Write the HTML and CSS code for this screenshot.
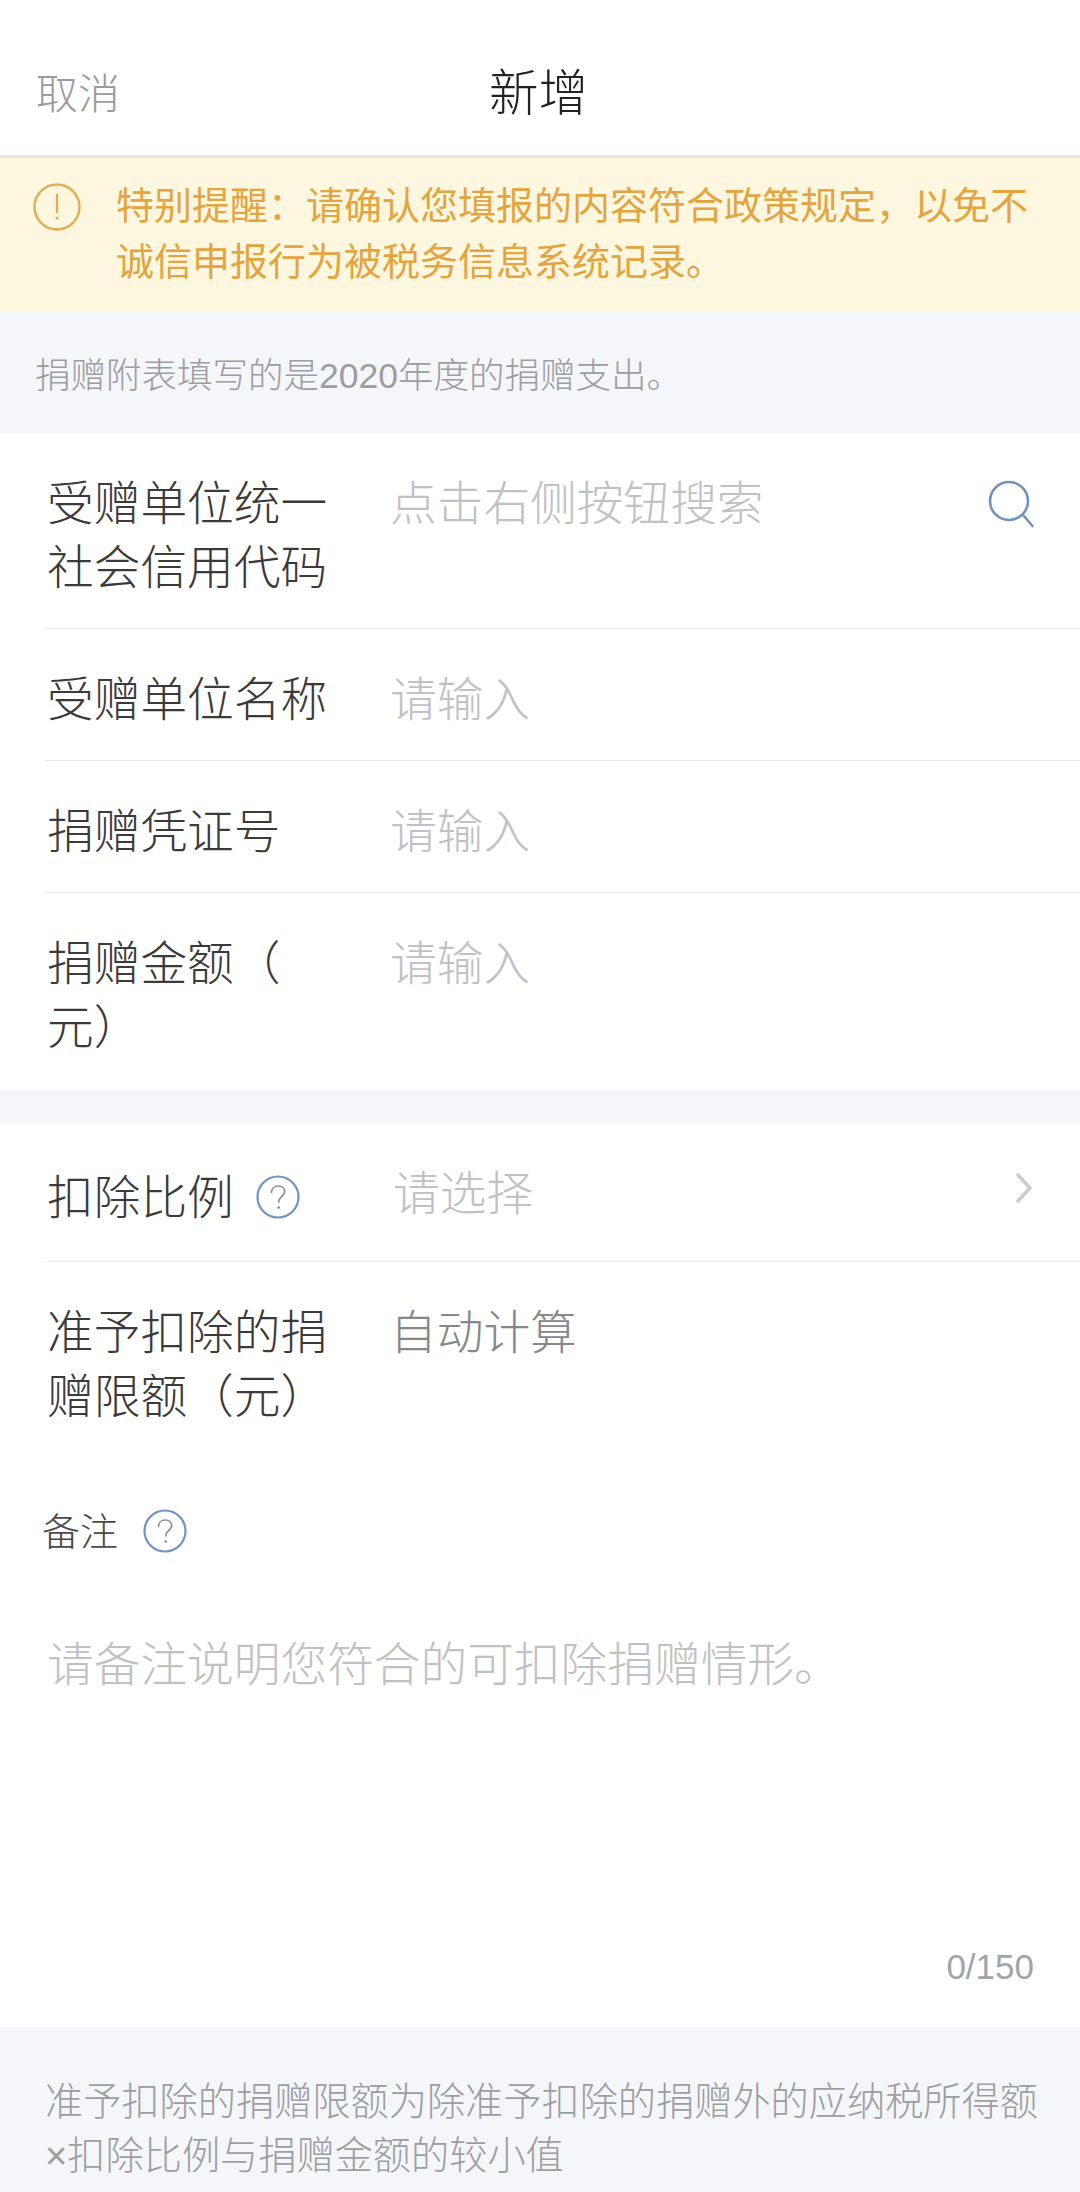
FILE: index.html
```html
<!DOCTYPE html>
<html lang="zh-CN">
<head>
<meta charset="utf-8">
<title>新增</title>
<link rel="stylesheet" href="styles.css">
</head>
<body>
<div class="page">
  <header class="nav">
    <span class="nav-cancel">取消</span>
    <h1 class="nav-title">新增</h1>
  </header>

  <section class="notice">
    <svg class="notice-icon" viewBox="0 0 48 48" width="48" height="48" aria-hidden="true">
      <circle cx="24" cy="24" r="22.5" fill="none" stroke="#e2ad54" stroke-width="2.4"/>
      <path d="M24 12v17" stroke="#e2ad54" stroke-width="2.4" stroke-linecap="round" fill="none"/>
      <circle cx="24" cy="35" r="1.6" fill="#e2ad54"/>
    </svg>
    <p class="notice-text">特别提醒&#xFF1A;请确认您填报的内容符合政策规定&#xFF0C;以免不诚信申报行为被税务信息系统记录。</p>
  </section>

  <p class="hint">捐赠附表填写的是<span class="num">2020</span>年度的捐赠支出。</p>

  <section class="group">
    <div class="row">
      <div class="row-label">受赠单位统一<br>社会信用代码</div>
      <div class="row-value placeholder">点击右侧按钮搜索</div>
      <svg class="search-icon" viewBox="0 0 50 50" width="50" height="50" aria-hidden="true">
        <circle cx="21" cy="21" r="19" fill="none" stroke="#6f93bd" stroke-width="2.6"/>
        <path d="M35 35l9.5 11" fill="none" stroke="#6f93bd" stroke-width="2.6" stroke-linecap="round"/>
      </svg>
    </div>
    <div class="row">
      <div class="row-label">受赠单位名称</div>
      <div class="row-value placeholder">请输入</div>
    </div>
    <div class="row">
      <div class="row-label">捐赠凭证号</div>
      <div class="row-value placeholder">请输入</div>
    </div>
    <div class="row row-last">
      <div class="row-label">捐赠金额&#xFF08;<br>元&#xFF09;</div>
      <div class="row-value placeholder">请输入</div>
    </div>
  </section>

  <section class="group group-second">
    <div class="row row-select">
      <div class="row-label label-help">
        <span>扣除比例</span>
        <svg class="help-icon help-icon-row" viewBox="0 0 44 44" width="44" height="44" aria-hidden="true">
          <circle cx="22" cy="22" r="20.5" fill="none" stroke="#6f93c4" stroke-width="2.2"/>
          <path d="M15.5 17.5c0-4 3-6.500 6.700-6.500 3.800 0 6.500 2.500 6.500 5.800 0 4.500-6 4.800-6 10.200" fill="none" stroke="#8a8c90" stroke-width="1.700" stroke-linecap="round"/>
          <circle cx="22.700" cy="32.500" r="1.300" fill="#8a8c90"/>
        </svg>
      </div>
      <div class="row-value row-value-select placeholder">请选择</div>
      <svg class="chevron" viewBox="0 0 20 32" width="20" height="32" aria-hidden="true">
        <path d="M4 3l12 13L4 29" fill="none" stroke="#c9cbce" stroke-width="3.600" stroke-linecap="round" stroke-linejoin="round"/>
      </svg>
    </div>
    <div class="row row-auto">
      <div class="row-label">准予扣除的捐<br>赠限额&#xFF08;元&#xFF09;</div>
      <div class="row-value auto">自动计算</div>
    </div>
  </section>

  <section class="remark">
    <div class="remark-label">
      <span>备注</span>
      <svg class="help-icon help-icon-remark" viewBox="0 0 44 44" width="44" height="44" aria-hidden="true">
        <circle cx="22" cy="22" r="20.5" fill="none" stroke="#6f93c4" stroke-width="2.2"/>
        <path d="M15.5 17.5c0-4 3-6.500 6.700-6.500 3.800 0 6.500 2.500 6.500 5.800 0 4.500-6 4.800-6 10.200" fill="none" stroke="#8a8c90" stroke-width="1.700" stroke-linecap="round"/>
        <circle cx="22.700" cy="32.500" r="1.300" fill="#8a8c90"/>
      </svg>
    </div>
    <div class="remark-input placeholder">请备注说明您符合的可扣除捐赠情形。</div>
    <div class="remark-count">0/150</div>
  </section>

  <footer class="foot">准予扣除的捐赠限额为除准予扣除的捐赠外的应纳税所得额<br><span class="times">×</span>扣除比例与捐赠金额的较小值</footer>
</div>
</body>
</html>
```

FILE: styles.css
```css
* { box-sizing: border-box; }
html, body { margin: 0; padding: 0; background: #f4f6fa; }
body { font-family: "Noto Sans CJK SC", "Noto Sans", sans-serif; font-weight: 300; }
.page { width: 1080px; height: 2192px; overflow: hidden; background: #f4f6fa; }

.nav {
  height: 158px;
  background: #fff;
  border-bottom: 3px solid #e6e6e2;
  display: flex;
  align-items: center;
  padding: 60px 36px 33px;
  position: relative;
}
.nav-cancel { font-size: 42px; line-height: 60px; color: #9b9b9b; }
.nav-title {
  position: absolute;
  left: 0;
  right: 0;
  top: 58px;
  margin: 0;
  text-align: center;
  font-size: 49.500px;
  line-height: 64px;
  font-weight: 300;
  color: #222;
  padding-right: 3px;
}

.notice {
  height: 154px;
  background: #fdf7df;
  display: flex;
  align-items: flex-start;
  padding: 17px 30px 0 33px;
  gap: 35px;
}
.notice-icon { flex: none; margin-top: 8px; }
.notice-text { margin: 0; width: 916px; font-size: 38px; line-height: 56px; color: #e2a53f; font-weight: 400; }

.hint {
  margin: 0;
  height: 121px;
  padding: 37px 0 0 35px;
  font-size: 35.500px;
  line-height: 48px;
  color: #9b9da1;
}
.num { font-family: "Liberation Sans", sans-serif; }

.group { background: #fff; padding-left: 45px; }
.group-second { margin-top: 33px; }

.row {
  display: flex;
  align-items: flex-start;
  padding: 35px 0 32px;
  border-bottom: 1px solid #e8e8e8;
  position: relative;
}
.row-last { border-bottom: 0; padding-bottom: 34px; }
.row-select { padding: 39px 0 35px; }
.row-auto { border-bottom: 0; padding-bottom: 0; }
.row-label {
  flex: none;
  width: 345px;
  padding-left: 2px;
  font-size: 46.700px;
  line-height: 64px;
  color: #3a3a3a;
}
.label-help { display: flex; align-items: center; gap: 22px; }
.row-value { font-size: 46.700px; line-height: 64px; }
.row-value-select { margin-left: 3px; margin-top: -4px; }
.placeholder { color: #bfc1c4; }
.auto { color: #85878a; }

.search-icon { position: absolute; right: 42px; top: 47px; }
.chevron { position: absolute; right: 46px; top: 49px; }
.help-icon { flex: none; }
.help-icon-row { margin-top: 5px; }
.help-icon-remark { margin-top: 4px; }

.remark { background: #fff; padding: 76px 46px 40px 42px; }
.remark-label {
  display: flex;
  align-items: center;
  gap: 25px;
  font-size: 38px;
  line-height: 56px;
  color: #4a4a4a;
}
.remark-input { margin: 72px 0 0 5px; font-size: 46.700px; line-height: 64px; }
.remark-count {
  margin-top: 254px;
  text-align: right;
  font-family: "Liberation Sans", sans-serif;
  font-size: 35px;
  line-height: 40px;
  color: #a2a4a7;
}

.foot {
  padding: 45px 30px 0 45px;
  font-size: 38.200px;
  line-height: 54px;
  color: #9c9ea2;
}
.times { font-family: "Liberation Sans", sans-serif; }
```
